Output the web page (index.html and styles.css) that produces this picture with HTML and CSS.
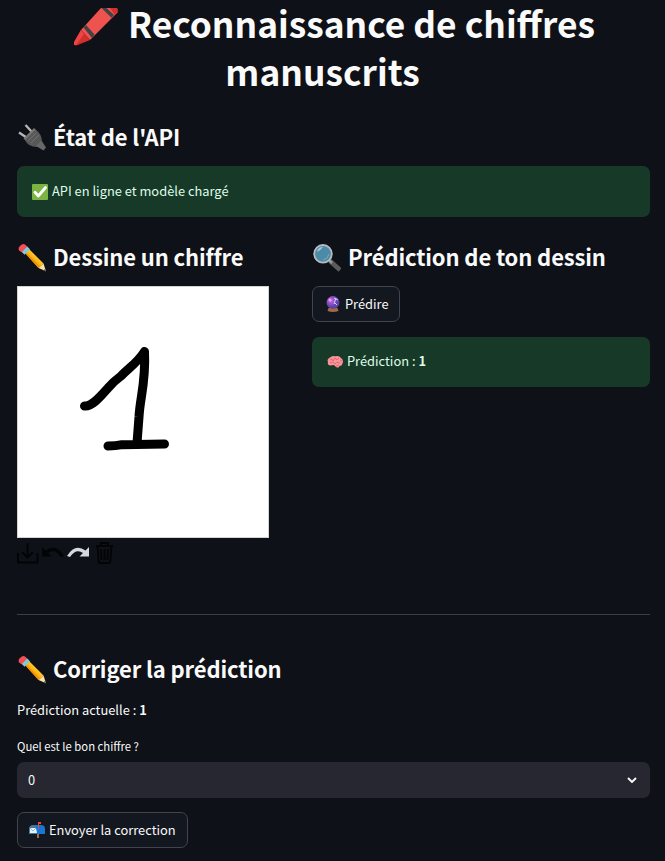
FILE: index.html
```html
<!DOCTYPE html>
<html lang="fr">
<head>
<meta charset="utf-8">
<title>Reconnaissance de chiffres manuscrits</title>
<link rel="stylesheet" href="styles.css">
</head>
<body>
<svg width="0" height="0" class="defs" aria-hidden="true">
  <defs>
    <linearGradient id="wood" x1="0" y1="1" x2="1" y2="0"><stop offset=".35" stop-color="#f59b00"/><stop offset=".6" stop-color="#ffca28"/></linearGradient>
    <radialGradient id="orb" cx=".35" cy=".35"><stop offset="0" stop-color="#d36de0"/><stop offset=".55" stop-color="#8b4fc5"/><stop offset="1" stop-color="#5b43a8"/></radialGradient>
    <symbol id="pencil" viewBox="0 0 28 28">
      <path d="M6 8 10 4 25.500 19.500 20.500 24z" fill="url(#wood)"/>
      <path d="M7.500 9.500 20.500 24 22 22.500 8 8z" fill="#f39200"/>
      <path d="M20.500 24 25.500 19.500 28 27.300z" fill="#ffe0a3"/>
      <path d="M25.300 26.400 27.200 24.800 28 27.400z" fill="#555"/>
      <path d="M3.500 7.800 9 2.300 12 5.300 6.500 10.800z" fill="#82c9dc"/>
      <path d="M1 6.500Q-.2 4 2 2 5-1 7.300.7L9.200 2.500 3.500 8.200z" fill="#f44f55"/>
    </symbol>
  </defs>
</svg>
<main class="page">
  <h1 class="title"><svg class="crayon" viewBox="0 0 44 38" role="img" aria-label="crayon"><path d="M27 0H40.500L44 4 16 32 7 22z" fill="#ef5350"/><path d="M7 22 16 32 2.500 37.500Q0 37.500 0 35z" fill="#d32f2f"/><path d="M7 22 10 26 2 37 0 37 0 34z" fill="#ef4444"/><path d="M36 0H43Q45 2 43 4L40.500 6.500z" fill="#d32f2f"/><path d="M27.500 0H32.500L40 7 37.500 9.800z" fill="#424242"/><path d="M9.500 19.500 12 17 20.500 26.500 18 30z" fill="#424242"/></svg> Reconnaissance de chiffres<br>manuscrits</h1>

  <h3 class="heading"><svg class="emoji" viewBox="0 0 28 28" role="img" aria-label="prise"><path d="M1 9.500 8.500 14.500M7.500 2 14 9" stroke="#b7b7b7" stroke-width="2.300"/><path d="M5.500 15.500 16 5 18.500 7.500 8 18z" fill="#777"/><path d="M7 17 17.500 6.500Q24 11 24 19L19 24Q10 24 7 17z" fill="#585858"/><path d="M10 18 18 10M13 20 21 12" stroke="#707070"/><path d="M18 23 23.500 17.500 28 24.500 25.500 27.500z" fill="#686868"/></svg><span>État de l'API</span></h3>
  <div class="alert status"><svg class="small" viewBox="0 0 16 16" role="img" aria-label="ok"><rect width="16" height="16" rx="1" fill="#7cb342"/><path d="M3 8.300 6.300 12 13.500 3.500" fill="none" stroke="#fff" stroke-width="2.800" stroke-linecap="round" stroke-linejoin="round"/></svg><span>API en ligne et modèle chargé</span></div>

  <div class="columns">
    <section>
      <h3 class="heading"><svg class="emoji" role="img" aria-label="crayon"><use href="#pencil"/></svg><span>Dessine un chiffre</span></h3>
      <div class="board"><svg viewBox="0 0 250 250"><path d="M66.500 119C74 120 83 109 90 101Q95 95 103 89C112 80 120 75 126.500 64.500C128 96 122 110 121 130L119 156M90 159Q98 159 104 157.700L146.500 157" fill="none" stroke="#000" stroke-width="9" stroke-linecap="round" stroke-linejoin="round"/></svg></div>
      <div class="tools">
        <svg viewBox="0 0 24 24"><path d="M2 12v9.500h19.500V12M11.500 2v14M6 11l5.500 5.500L17 11" fill="none" stroke="#030405" stroke-width="2"/></svg>
        <svg viewBox="0 0 24 24"><path d="M1 6v9.500h9.500L7 12Q14 7 20 16L23 15Q15 2 4.500 9.500z" fill="#030405"/></svg>
        <svg viewBox="0 0 24 24"><path d="M23 6v9.500h-9.500L17 12Q10 7 4 16L1 15Q9 2 19.500 9.500z" fill="#d5d8e1"/></svg>
        <svg viewBox="0 0 24 24"><path d="M4 5h17M9 5V2h7v3M5.500 5l1.200 16q.1 1 1.200 1h9.200q1.100 0 1.200-1L19.500 5M9 8l.5 11M12.500 8v11M16 8l-.5 11" fill="none" stroke="#030405" stroke-width="1.800"/></svg>
      </div>
    </section>
    <section>
      <h3 class="heading"><svg class="emoji" viewBox="0 0 28 28" role="img" aria-label="loupe"><path d="M17 17 27 26" stroke="#5b5b5b" stroke-width="4.500"/><path d="M16 16 19 19" stroke="#999" stroke-width="2.500"/><circle cx="10" cy="9.800" r="8.800" fill="#4c8aa8" stroke="#b6bcc0" stroke-width="1.800"/><path d="M4 8Q5 3 10 3 7 7 4 8z" fill="#a5cadb"/><path d="M16 10Q15 15 10 16" fill="none" stroke="#78a9bf"/></svg><span>Prédiction de ton dessin</span></h3>
      <button class="button predict"><svg class="small" viewBox="0 0 16 16" role="img" aria-label="boule"><path d="M3.500 12h9l1 3Q8 17 2.500 15z" fill="#a7683d"/><circle cx="8" cy="6.500" r="6.500" fill="url(#orb)"/><path d="M9 2 13 4M10 7 12 9M11 2 9 8" stroke="#d8c8ff"/><circle cx="5" cy="4" r="1.500" fill="#ef9dec"/></svg><span>Prédire</span></button>
      <div class="alert result"><svg class="small" viewBox="0 0 16 16" role="img" aria-label="cerveau"><path d="M1 8Q-.5 5 3 3.500 5 1.300 8 2.300 12 1 14 4 17 6 15.500 9.500 15 12 12.500 12 12 14.500 9 13L7 11 3 11.500Q0 11 1 8z" fill="#fa9299"/><path d="M3 6 5 5 6 7 8 4 10 6 12 4M3 9 6 8 8 10 10 8 13 9M9 12 12 11M13 6 15 7" fill="none" stroke="#d65f6c" stroke-width=".8"/></svg><span>Prédiction : <b>1</b></span></div>
    </section>
  </div>
  <hr>
  <h3 class="heading"><svg class="emoji" role="img" aria-label="crayon"><use href="#pencil"/></svg><span>Corriger la prédiction</span></h3>
  <p class="current">Prédiction actuelle : <b>1</b></p>
  <div class="label">Quel est le bon chiffre ?</div>
  <div class="select"><span>0</span><svg viewBox="0 0 10 6"><path d="M1 1 5 5 9 1" fill="none" stroke="#fafafa" stroke-width="1.900"/></svg></div>
  <button class="button send"><svg class="small" viewBox="0 0 16 16" role="img" aria-label="courrier"><path d="M8 10h2v6H8z" fill="#a66b43"/><path d="M4 3h8Q16 3 16 7v5H4z" fill="#1976d2"/><path d="M0 12V6Q1 3 4 3T7 6v6z" fill="#4e7890"/><path d="M1 6h6l1 5H1z" fill="#e3f2fd"/><path d="M1 6 4 9 7 6" fill="none" stroke="#8bbdd9"/><path d="M9 7V0h3v2h-2v5z" fill="#f44336"/></svg><span>Envoyer la correction</span></button>
</main>
</body>
</html>
```
FILE: styles.css
```css
* { box-sizing: border-box; }
body {
  margin: 0;
  height: 861px;
  overflow: hidden;
  background: #0e1117;
  color: #fafafa;
  font: 12.86px/22px "Noto Sans CJK SC", "Noto Sans", sans-serif;
}
.defs { position: absolute; }
.page { width: 633px; margin-left: 17px; display: flow-root; }
svg { display: block; flex: none; }
.title { height: 97px; margin: 0 0 0 -22px; padding-bottom: 1px; font-size: 35.35px; line-height: 48px; font-weight: 700; text-align: center; white-space: nowrap; margin-top: -1px; }
.crayon { display: inline-block; width: 44px; height: 38px; vertical-align: -8px; margin: 0 2px 0 24px; }
.heading { display: flex; align-items: center; gap: 7px; height: 30px; margin: 0; font-size: 22px; line-height: 30px; font-weight: 600; letter-spacing: -.13px; white-space: nowrap; }
.heading span { padding-bottom: 3px; line-height: 27px; }
.title + .heading { margin-top: 26px; }
.title + .heading span { padding-bottom: 2px; }
.emoji { width: 28px; height: 28px; margin-left: 1px; }
.small { width: 16px; height: 16px; }
.alert { display: flex; align-items: center; gap: 4px; height: 51px; padding-left: 15px; border-radius: 7px; background: #173928; color: #dffde9; }
.alert span { padding-bottom: 2px; }
.status { margin-top: 14px; }
.columns { display: grid; grid-template-columns: 280.6px 1fr; column-gap: 14.4px; margin-top: 26px; height: 322px; }
.board { width: 252px; height: 252px; margin-top: 13px; background: #fff; border: 1px solid #d3d3d3; }
.board svg { width: 250px; height: 250px; }
.tools { display: flex; gap: 1.2px; margin: 3px 0 0 -1px; }
.tools svg { width: 24px; height: 24px; }
.button { display: flex; align-items: center; gap: 4px; height: 36px; padding: 0 11px; border: 1px solid #41444c; border-radius: 7px; background: #131720; color: #fafafa; font: inherit; white-space: nowrap; }
.predict { width: 88px; margin-top: 13px; padding-left: 12px; }
.result { margin-top: 15px; height: 50px; }
hr { height: 1px; border: 0; background: #3b3e43; margin: 49px 0 40px; }
.current { margin: 14px 0 0; }
.label { margin-top: 14px; font-size: 11.3px; line-height: 22px; }
.select { display: flex; align-items: center; justify-content: space-between; height: 36px; margin-top: 5px; padding: 0 13px 0 11px; background: #262730; border-radius: 7px; }
.select svg { width: 10px; height: 6px; }
.send { width: 171px; margin-top: 14px; }
```
